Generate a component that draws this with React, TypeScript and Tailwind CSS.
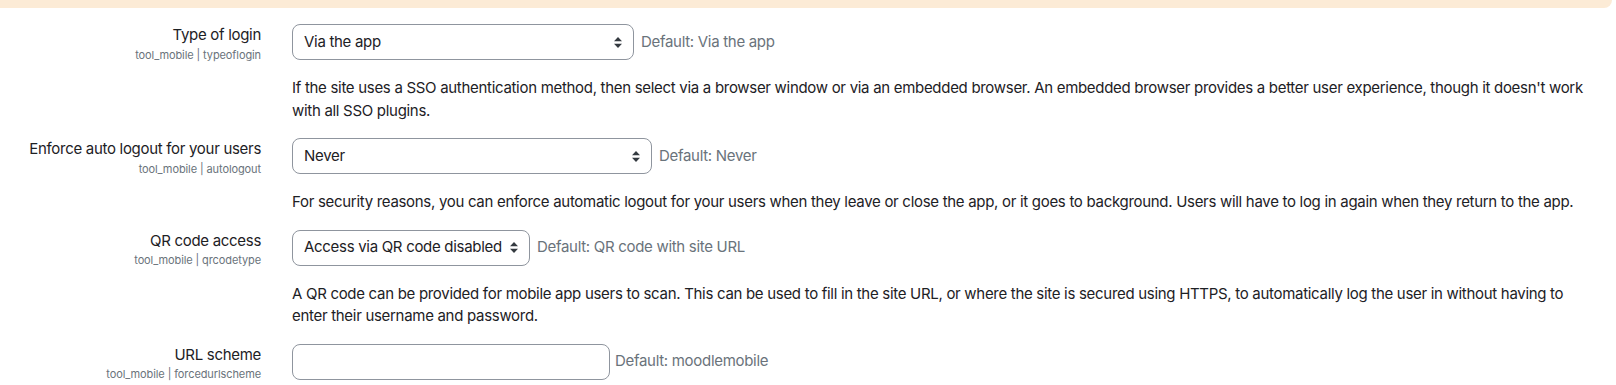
import React from "react";

type Setting = {
  name: string;
  id: string;
  kind: "select" | "text";
  value: string;
  width: string;
  defaultText: string;
  description: string;
};

const settings: Setting[] = [
  {
    name: "Type of login",
    id: "tool_mobile | typeoflogin",
    kind: "select",
    value: "Via the app",
    width: "w-[342px]",
    defaultText: "Default: Via the app",
    description:
      "If the site uses a SSO authentication method, then select via a browser window or via an embedded browser. An embedded browser provides a better user experience, though it doesn't work with all SSO plugins.",
  },
  {
    name: "Enforce auto logout for your users",
    id: "tool_mobile | autologout",
    kind: "select",
    value: "Never",
    width: "w-[360px]",
    defaultText: "Default: Never",
    description:
      "For security reasons, you can enforce automatic logout for your users when they leave or close the app, or it goes to background. Users will have to log in again when they return to the app.",
  },
  {
    name: "QR code access",
    id: "tool_mobile | qrcodetype",
    kind: "select",
    value: "Access via QR code disabled",
    width: "w-[238px]",
    defaultText: "Default: QR code with site URL",
    description:
      "A QR code can be provided for mobile app users to scan. This can be used to fill in the site URL, or where the site is secured using HTTPS, to automatically log the user in without having to enter their username and password.",
  },
  {
    name: "URL scheme",
    id: "tool_mobile | forcedurlscheme",
    kind: "text",
    value: "",
    width: "w-[318px]",
    defaultText: "Default: moodlemobile",
    description: "",
  },
];

function SelectArrows() {
  return (
    <svg width="8" height="11" viewBox="0 0 8 11" className="shrink-0">
      <path d="M4 0 L8 4.2 L0 4.2 Z" fill="#343a40" />
      <path d="M0 6.8 L8 6.8 L4 11 Z" fill="#343a40" />
    </svg>
  );
}

function SettingRow({ s }: { s: Setting }) {
  return (
    <div className="flex mb-4">
      <div className="w-[261px] shrink-0 text-right">
        <div className="text-[15px] leading-[22.5px] tracking-[-0.3px] text-[#1d2125]">
          {s.name}
        </div>
        <div className="text-[11px] leading-[16px] tracking-[-0.1px] text-[#6a737b]">
          {s.id}
        </div>
      </div>
      <div className="flex-1 ml-[31px] pr-[15px] tracking-[-0.3px]">
        <div className="flex items-center">
          {s.kind === "select" ? (
            <div
              className={`${s.width} h-[36px] flex items-center justify-between border border-[#8f959e] rounded-lg pl-[11px] pr-[11px] text-[15px] text-[#1d2125] bg-white`}
            >
              <span className="whitespace-nowrap">{s.value}</span>
              <SelectArrows />
            </div>
          ) : (
            <div
              className={`${s.width} h-[36px] border border-[#8f959e] rounded-lg bg-white`}
            />
          )}
          <div
            className={`${s.kind === "select" ? "ml-[7px]" : "ml-[5px]"} text-[15px] leading-[22.5px] text-[#6a737b]`}
          >
            {s.defaultText}
          </div>
        </div>
        {s.description && (
          <div className="mt-[17px] text-[15px] leading-[22.5px] text-[#1d2125]">
            {s.description}
          </div>
        )}
      </div>
    </div>
  );
}

export default function App() {
  return (
    <div
      className="w-[1616px] h-[385px] overflow-hidden bg-white"
      style={{ fontFamily: "Inter, 'Noto Sans', sans-serif" }}
    >
      <div className="h-[8px] mr-[4px] bg-[#fcebd6] rounded-br-lg" />
      <div className="pt-4">
        {settings.map((s) => (
          <SettingRow key={s.id} s={s} />
        ))}
      </div>
    </div>
  );
}
